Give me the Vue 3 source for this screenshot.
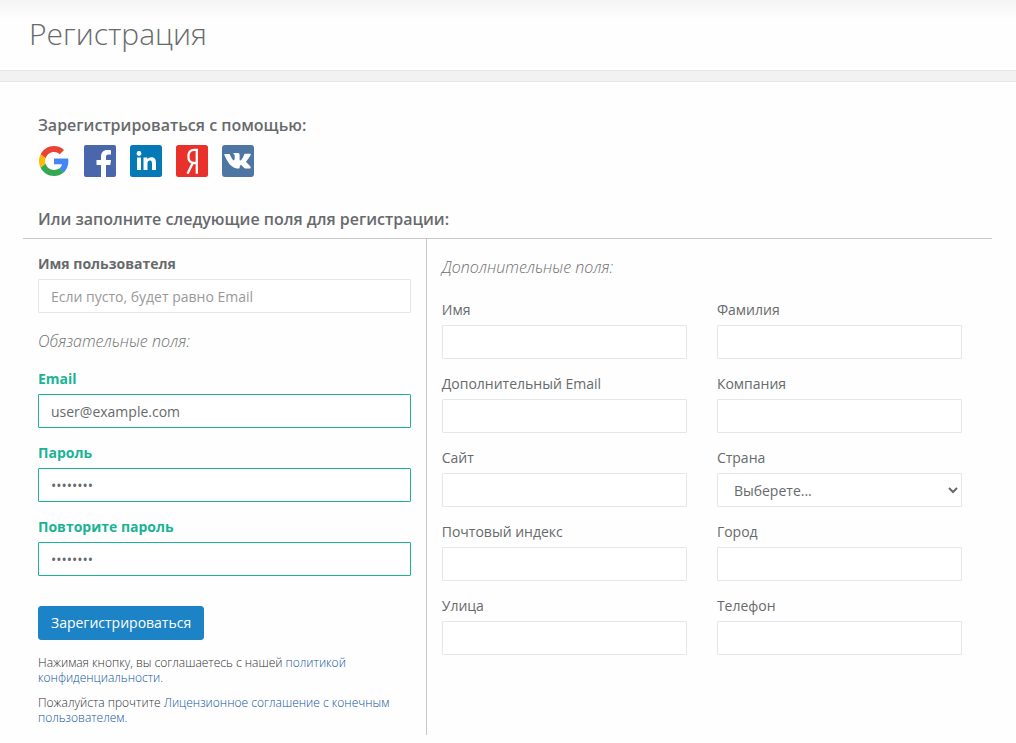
<script setup>
import { reactive } from 'vue'

const form = reactive({
  username: '',
  email: 'user@example.com',
  password: 'password',
  repeat: 'password',
})

const extra = reactive([
  { id: 'first-name', label: 'Имя', value: '' },
  { id: 'last-name', label: 'Фамилия', value: '' },
  { id: 'extra-email', label: 'Дополнительный Email', value: '' },
  { id: 'company', label: 'Компания', value: '' },
  { id: 'site', label: 'Сайт', value: '' },
  { id: 'country', label: 'Страна', value: '', select: true },
  { id: 'zip', label: 'Почтовый индекс', value: '' },
  { id: 'city', label: 'Город', value: '' },
  { id: 'street', label: 'Улица', value: '' },
  { id: 'phone', label: 'Телефон', value: '' },
])
</script>

<template>
  <div class="page">
    <header class="heading">
      <h1>Регистрация</h1>
    </header>
    <div class="band"></div>

    <main class="content">
      <h2>Зарегистрироваться с помощью:</h2>
      <nav class="socials">
        <a href="#" aria-label="Google">
          <svg viewBox="0 0 32 32">
            <g transform="translate(1 1) scale(0.625)">
              <path fill="#EA4335" d="M24 9.5c3.54 0 6.71 1.22 9.21 3.6l6.85-6.85C35.9 2.38 30.47 0 24 0 14.62 0 6.51 5.38 2.56 13.22l7.98 6.19C12.43 13.72 17.74 9.5 24 9.5z" />
              <path fill="#4285F4" d="M46.98 24.55c0-1.57-.15-3.09-.38-4.55H24v9.02h12.94c-.58 2.96-2.26 5.48-4.78 7.18l7.73 6c4.51-4.18 7.09-10.36 7.09-17.65z" />
              <path fill="#FBBC05" d="M10.53 28.59c-.48-1.45-.76-2.99-.76-4.59s.27-3.14.76-4.59l-7.98-6.19C.92 16.46 0 20.12 0 24c0 3.88.92 7.54 2.56 10.78l7.97-6.19z" />
              <path fill="#34A853" d="M24 48c6.48 0 11.93-2.13 15.89-5.81l-7.73-6c-2.15 1.45-4.92 2.3-8.16 2.3-6.26 0-11.57-4.22-13.47-9.91l-7.98 6.19C6.51 42.62 14.62 48 24 48z" />
            </g>
          </svg>
        </a>
        <a href="#" aria-label="Facebook">
          <svg viewBox="0 0 32 32">
            <rect width="32" height="32" rx="2" fill="#4a66ad" />
            <path fill="#fff" d="M17 32V20h-4.500v-5H17v-3.300C17 7.300 19.500 5 23.300 5c1.800 0 3.200.2 3.700.2v4.400h-2.600c-2 0-2.400 1-2.400 2.400v3h5l-.7 5H22v12z" />
          </svg>
        </a>
        <a href="#" aria-label="LinkedIn">
          <svg viewBox="0 0 32 32">
            <rect width="32" height="32" rx="2.500" fill="#0579b6" />
            <circle cx="9" cy="8.500" r="2.400" fill="#fff" />
            <path fill="#fff" d="M7 12.500h4V25H7zM13.500 12.500h3.800v1.700c.6-1 1.900-2 3.900-2 4 0 4.800 2.600 4.800 6V25h-4v-6c0-1.500 0-3.400-2.100-3.400-2 0-2.400 1.600-2.400 3.200V25h-4z" />
          </svg>
        </a>
        <a href="#" aria-label="Яндекс">
          <svg viewBox="0 0 32 32">
            <rect width="32" height="32" rx="2.500" fill="#e9302b" />
            <path fill="none" stroke="#fff" stroke-width="2.300" d="M20.800 28.800V4.800h-2.400c-3.600 0-6 2.400-6 6.500s2.200 6.700 5.700 6.700h2.700M16.700 18l-5.200 10.800" />
          </svg>
        </a>
        <a href="#" aria-label="ВКонтакте">
          <svg viewBox="0 0 32 32">
            <rect width="32" height="32" rx="3" fill="#4d76a3" />
            <path transform="translate(0 1)" fill="#fff" d="M15.300 22.500h1.500s.5-.1.700-.3c.2-.3.200-.7.200-.7s0-2.100 1-2.400c1-.3 2.200 2 3.500 2.900 1 .7 1.800.5 1.800.5l3.500 0s1.900-.1 1-1.600c-.1-.1-.5-1.100-2.700-3.100-2.300-2.100-2-1.800.8-5.500 1.700-2.200 2.300-3.600 2.100-4.200-.2-.5-1.400-.4-1.400-.4h-4s-.3 0-.5.1c-.2.100-.4.500-.4.500s-.6 1.700-1.500 3.100c-1.800 3-2.500 3.200-2.800 3-.7-.4-.5-1.800-.5-2.700 0-3 .4-4.200-.9-4.500-.4-.1-.7-.2-1.800-.2-1.400 0-2.500 0-3.200.3-.4.2-.8.700-.6.7.3 0 .9.200 1.200.6.400.6.400 1.800.4 1.800s.2 3.500-.6 3.900c-.5.300-1.300-.3-2.800-2.900-.8-1.300-1.400-2.800-1.400-2.800s-.1-.3-.3-.4c-.3-.2-.6-.3-.6-.3l-3.800 0s-.6 0-.8.300c-.2.200 0 .7 0 .7s3 6.900 6.300 10.400c3.100 3.200 6.600 3.200 6.600 3.200z" />
          </svg>
        </a>
      </nav>
      <h2>Или заполните следующие поля для регистрации:</h2>

      <form class="columns" @submit.prevent>
        <section class="main-fields">
          <div class="group">
            <label for="username">Имя пользователя</label>
            <input id="username" v-model="form.username" type="text" placeholder="Если пусто, будет равно Email">
          </div>
          <p class="note">Обязательные поля:</p>
          <div class="group valid">
            <label for="email">Email</label>
            <input id="email" v-model="form.email" type="email">
          </div>
          <div class="group valid">
            <label for="password">Пароль</label>
            <input id="password" v-model="form.password" type="password">
          </div>
          <div class="group valid">
            <label for="repeat">Повторите пароль</label>
            <input id="repeat" v-model="form.repeat" type="password">
          </div>
          <button type="submit">Зарегистрироваться</button>
          <p class="legal">Нажимая кнопку, вы соглашаетесь с нашей <a href="#">политикой конфиденциальности.</a></p>
          <p class="legal">Пожалуйста прочтите <a href="#">Лицензионное соглашение с конечным пользователем.</a></p>
        </section>

        <section class="extra-fields">
          <p class="note">Дополнительные поля:</p>
          <div class="grid">
            <div v-for="field in extra" :key="field.id" class="group">
              <label :for="field.id">{{ field.label }}</label>
              <select v-if="field.select" :id="field.id" v-model="field.value">
                <option value="">Выберете...</option>
              </select>
              <input v-else :id="field.id" v-model="field.value" type="text">
            </div>
          </div>
        </section>
      </form>
    </main>
  </div>
</template>

<style>
body {
  margin: 0;
  background: #fefefe;
}
</style>

<style scoped>
.page {
  font: 14px/20px "Open Sans", "Noto Sans", sans-serif;
  color: #676a6c;
}
.page * {
  box-sizing: border-box;
}
.heading {
  padding: 17px 29px 20px;
  background: linear-gradient(#f4f4f4, #fefefe 20px);
}
h1 {
  margin: 0;
  font-size: 30px;
  line-height: 33px;
  font-weight: 300;
}
.band {
  height: 12px;
  background: #f2f2f2;
  border: solid #e7e7e7;
  border-width: 1px 0;
}
.content {
  padding: 33px 24px 8px 23px;
}
h2 {
  margin: 0 15px;
  font-size: 16px;
  line-height: 20px;
  font-weight: 600;
}
.socials {
  display: flex;
  gap: 14px;
  margin: 10px 15px 32px;
}
.socials a,
.socials svg {
  display: block;
  width: 32px;
  height: 32px;
}
.columns {
  display: grid;
  grid-template-columns: 5fr 7fr;
  margin-top: 9px;
  border-top: 1px solid #c8c8c8;
}
.main-fields {
  padding: 15px 15px 0;
  border-right: 1px solid #c8c8c8;
}
.extra-fields {
  padding: 18px 30px 0 15px;
}
.note {
  margin: 0;
  font-size: 16px;
  line-height: 20px;
  font-weight: 300;
  font-style: italic;
  color: #707070;
}
.main-fields .note {
  margin: 18px 0;
}
.grid {
  display: grid;
  grid-template-columns: 1fr 1fr;
  column-gap: 30px;
  margin-top: 23px;
}
.group {
  margin-bottom: 15px;
}
label {
  display: block;
  margin-bottom: 5px;
}
.main-fields label {
  font-weight: 700;
}
input,
select {
  display: block;
  width: 100%;
  height: 34px;
  margin: 0;
  padding: 6px 12px;
  font: inherit;
  color: inherit;
  background: #fff;
  border: 1px solid #e5e6e7;
  border-radius: 1px;
  outline: none;
}
input::placeholder {
  color: #999;
}
.valid label {
  color: #1ab394;
}
.valid input {
  border-color: #1ab394;
}
button {
  display: block;
  margin: 30px 0 15px;
  padding: 6px 12px;
  font: inherit;
  color: #fff;
  background: #1c84c6;
  border: 1px solid #1c84c6;
  border-radius: 3px;
  cursor: pointer;
}
.legal {
  margin: 0 0 10px;
  font-size: 12px;
  line-height: 15px;
  font-weight: 300;
  color: #303234;
}
a {
  color: #0f55a0;
  text-decoration: none;
}
</style>
